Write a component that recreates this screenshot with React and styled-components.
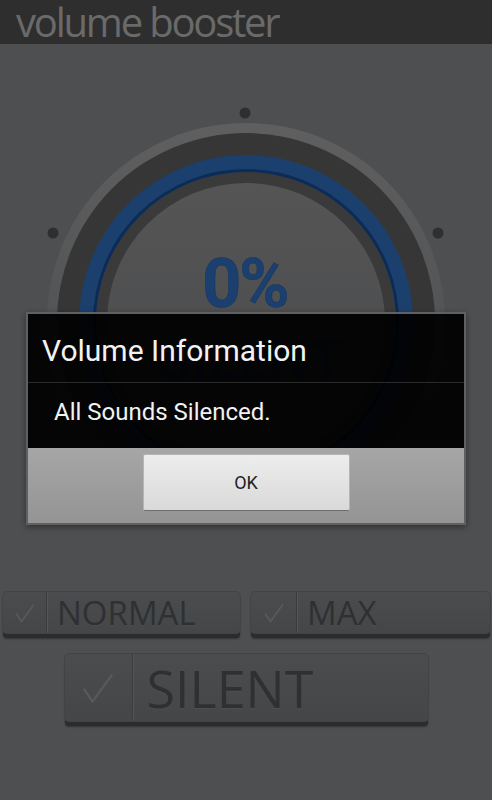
import styled, { createGlobalStyle } from "styled-components";

const GlobalStyle = createGlobalStyle`
  html, body {
    margin: 0;
    padding: 0;
    background: #4e4f51;
  }
  body {
    font-family: "Open Sans", "Liberation Sans", sans-serif;
  }
`;

const Screen = styled.div`
  position: relative;
  width: 492px;
  height: 800px;
  background: #4e4f51;
  overflow: hidden;
`;

const Header = styled.div`
  height: 44px;
  background: #2e2e2e;
  display: flex;
  align-items: flex-start;
  padding: 2px 0 0 16px;
  box-sizing: border-box;
`;

const Title = styled.div`
  font-family: "Open Sans", sans-serif;
  font-size: 40px;
  line-height: 40px;
  letter-spacing: -2.2px;
  color: #6a6a6a;
`;

const DialArea = styled.div`
  height: 547px;
  display: flex;
  justify-content: center;
`;

const Buttons = styled.div`
  display: flex;
  flex-direction: column;
  align-items: center;
  gap: 19px;
`;

const Row = styled.div`
  display: flex;
  gap: 9px;
  padding: 0 1px 0 2px;
`;

const ModeButton = styled.div`
  width: ${(p) => p.$w}px;
  height: ${(p) => p.$h}px;
  display: flex;
  box-sizing: border-box;
  border-radius: 5px;
  border: 1px solid #424345;
  background: linear-gradient(#4b4c4e, #454648);
  box-shadow: 0 5px 0 -1px #2c2c2d, 0 6px 2px -1px rgba(0, 0, 0, 0.35);
`;

const CheckCell = styled.div`
  width: ${(p) => p.$w}px;
  display: flex;
  align-items: center;
  justify-content: center;
  border-right: 1px solid #3a3b3d;
  box-shadow: 1px 0 0 #555658;
`;

const Label = styled.div`
  font-family: "Open Sans", sans-serif;
  font-size: ${(p) => p.$size}px;
  color: #2f3032;
  display: flex;
  align-items: center;
  padding-left: ${(p) => p.$pad}px;
  text-shadow: 0 1px 0 rgba(255, 255, 255, 0.04);
`;

const Backdrop = styled.div`
  position: absolute;
  inset: 0;
  padding-top: 312px;
  display: flex;
  justify-content: center;
  align-items: flex-start;
`;

const Dialog = styled.div`
  width: 440px;
  box-sizing: border-box;
  border: 2px solid #5f6062;
  box-shadow: 0 2px 6px rgba(0, 0, 0, 0.4);
  display: flex;
  flex-direction: column;
`;

const DialogTitle = styled.div`
  height: 69px;
  display: flex;
  align-items: center;
  padding-left: 14px;
  padding-top: 4px;
  box-sizing: border-box;
  background: rgba(0, 0, 0, 0.93);
  border-bottom: 1px solid #2a2a2a;
  font-family: Roboto, "Liberation Sans", sans-serif;
  font-size: 30px;
  color: #f2f2f2;
`;

const DialogBody = styled.div`
  height: 65px;
  display: flex;
  align-items: center;
  padding-left: 26px;
  padding-bottom: 8px;
  box-sizing: border-box;
  background: rgba(0, 0, 0, 0.93);
  font-family: Roboto, "Liberation Sans", sans-serif;
  font-size: 24px;
  color: #f2f2f2;
`;

const DialogActions = styled.div`
  height: 75px;
  display: flex;
  justify-content: center;
  align-items: flex-start;
  padding-top: 7px;
  box-sizing: border-box;
  background: linear-gradient(#a6a6a6, #949494);
`;

const OkButton = styled.button`
  width: 205px;
  height: 55px;
  border: none;
  border-radius: 1px;
  background: linear-gradient(#ededed, #d9d9d9);
  box-shadow: 0 1px 0 #6e6e6e, 0 0 0 1px #b5b5b5;
  font-family: Roboto, "Liberation Sans", sans-serif;
  font-size: 18px;
  color: #222;
`;

const Check = ({ size }) => (
  <svg width={size} height={size} viewBox="0 0 20 20">
    <polyline
      points="1.5,11 6.5,18.5 18.5,2"
      fill="none"
      stroke="#58595b"
      strokeWidth={size > 24 ? 1.5 : 1.8}
      strokeLinecap="round"
      strokeLinejoin="round"
    />
  </svg>
);

function Dial() {
  const cx = 246;
  const cy = 278;
  return (
    <svg width="492" height="547" viewBox="0 0 492 547">
      <defs>
        <linearGradient id="rim" x1="0" y1="0" x2="0" y2="1">
          <stop offset="0" stopColor="#5f5f60" />
          <stop offset="0.5" stopColor="#535455" />
          <stop offset="1" stopColor="#4a4a4b" />
        </linearGradient>
        <linearGradient id="face" x1="0" y1="0" x2="0" y2="1">
          <stop offset="0" stopColor="#555556" />
          <stop offset="1" stopColor="#48494a" />
        </linearGradient>
      </defs>
      <circle cx="245" cy="69" r="5.5" fill="#2f2f30" />
      <circle cx="53" cy="189" r="5.5" fill="#2f2f30" />
      <circle cx="438" cy="189" r="5.5" fill="#2f2f30" />
      <circle cx={cx} cy={cy} r="199" fill="url(#rim)" />
      <circle cx={cx} cy={cy} r="189" fill="#363637" />
      <circle cx={cx} cy={cy} r="158.5" fill="none" stroke="#1c406e" strokeWidth="17" />
      <circle cx={cx} cy={cy} r="151.5" fill="none" stroke="#0b2c58" strokeWidth="3" />
      <circle cx={cx} cy={cy} r="150" fill="#3a3a3b" />
      <circle cx={cx} cy={cy} r="139" fill="url(#face)" />
      <text
        x="245"
        y="263"
        textAnchor="middle"
        fontFamily="Roboto, sans-serif"
        fontWeight="700"
        fontSize="68"
        letterSpacing="-2"
        fill="#1b3f6e"
        stroke="#163560"
        strokeWidth="0.5"
      >
        0%
      </text>
      <text
        x="250"
        y="336"
        textAnchor="middle"
        fontFamily="Roboto, sans-serif"
        fontWeight="700"
        fontSize="56"
        fill="#1b3f6e"
      >
        SILENT
      </text>
    </svg>
  );
}

export default function App() {
  return (
    <Screen>
      <GlobalStyle />
      <Header>
        <Title>volume booster</Title>
      </Header>
      <DialArea>
        <Dial />
      </DialArea>
      <Buttons>
        <Row>
          <ModeButton $w={239} $h={43}>
            <CheckCell $w={43}>
              <Check size={20} />
            </CheckCell>
            <Label $size={33} $pad={10}>NORMAL</Label>
          </ModeButton>
          <ModeButton $w={241} $h={43}>
            <CheckCell $w={45}>
              <Check size={20} />
            </CheckCell>
            <Label $size={33} $pad={10}>MAX</Label>
          </ModeButton>
        </Row>
        <ModeButton $w={365} $h={69}>
          <CheckCell $w={67}>
            <Check size={32} />
          </CheckCell>
          <Label $size={52} $pad={14}>SILENT</Label>
        </ModeButton>
      </Buttons>
      <Backdrop>
        <Dialog>
          <DialogTitle>Volume Information</DialogTitle>
          <DialogBody>All Sounds Silenced.</DialogBody>
          <DialogActions>
            <OkButton>OK</OkButton>
          </DialogActions>
        </Dialog>
      </Backdrop>
    </Screen>
  );
}
